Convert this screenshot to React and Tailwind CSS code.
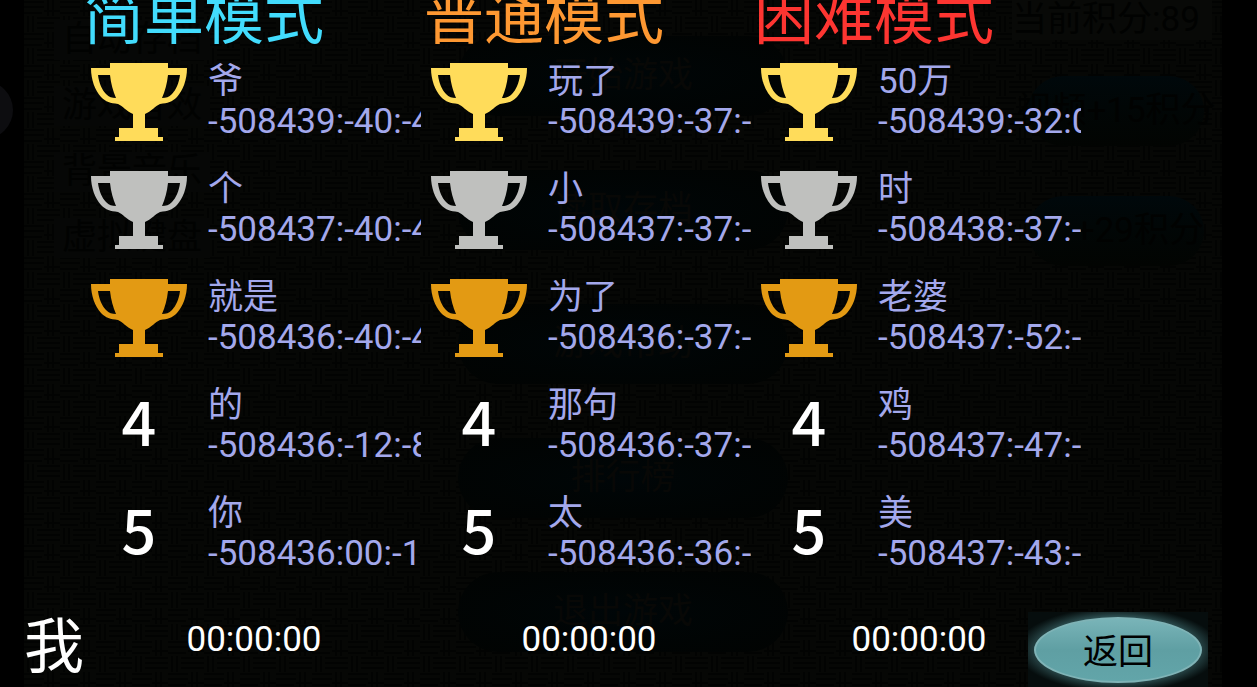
const modes = [
  {
    title: "简单模式",
    color: "text-[#42dcfd]",
    rows: [
      { name: "爷", time: "-508439:-40:-4" },
      { name: "个", time: "-508437:-40:-4" },
      { name: "就是", time: "-508436:-40:-4" },
      { name: "的", time: "-508436:-12:-8" },
      { name: "你", time: "-508436:00:-1" },
    ],
    mine: "00:00:00",
  },
  {
    title: "普通模式",
    color: "text-[#fe9832]",
    rows: [
      { name: "玩了", time: "-508439:-37:-" },
      { name: "小", time: "-508437:-37:-" },
      { name: "为了", time: "-508436:-37:-" },
      { name: "那句", time: "-508436:-37:-" },
      { name: "太", time: "-508436:-36:-" },
    ],
    mine: "00:00:00",
  },
  {
    title: "困难模式",
    color: "text-[#fd3531]",
    rows: [
      { name: "50万", time: "-508439:-32:0" },
      { name: "时", time: "-508438:-37:-" },
      { name: "老婆", time: "-508437:-52:-" },
      { name: "鸡", time: "-508437:-47:-" },
      { name: "美", time: "-508437:-43:-" },
    ],
    mine: "00:00:00",
  },
];

const trophyColors = ["text-[#ffdc5a]", "text-[#bfc0be]", "text-[#e39a13]"];

const settings = ["自动存档", "游戏音效", "背景音乐", "虚拟键盘"];
const menu = ["开始游戏", "读取存档", "游戏帮助", "排行榜", "退出游戏"];

function Trophy({ color }) {
  return (
    <svg viewBox="0 0 96 78" className={`w-24 ${color}`} fill="currentColor" fillRule="evenodd">
      <path d="M19 0H77V5H96C96 17 92 27 86 34C81 39 77 40 69 41C64 43 61 48 54 51V65H67V74H72V78H24V74H28V65H42V51C35 48 32 43 27 41C19 40 15 39 10 34C4 27 0 17 0 5H19ZM7 12C8 20 11 27 15 31C18 34 21 35 25 35C22 28 20 21 19 12ZM89 12H77C76 21 74 28 71 35C75 35 78 34 81 31C85 27 88 20 89 12Z" />
    </svg>
  );
}

// Main menu that stays dimmed behind the leaderboard
function DimmedMenu() {
  return (
    <div aria-hidden="true" className="absolute inset-0 bg-black pl-6 pr-[35px]">
      <div className="absolute -left-[45px] top-[81px] size-[58px] rounded-full bg-[#0d0d10]" />
      <div className="relative h-full bg-[#060705] overflow-hidden">
        <svg className="absolute inset-0 w-full h-full">
          <defs>
            <pattern id="weave" width="36" height="32" patternUnits="userSpaceOnUse">
              <path
                d="M0 2H20M0 7H20M24 0V16M29 0V16M20 11H36M4 16V32M9 16V32M13 18H36M13 23H36M13 28H36M0 13H18"
                stroke="#020302"
                strokeWidth="2"
                fill="none"
              />
            </pattern>
          </defs>
          <rect width="100%" height="100%" fill="url(#weave)" />
        </svg>
        <div className="relative grid grid-cols-[434fr_330fr_434fr] text-[35px] leading-10">
          <div className="pl-[30px] pt-5 flex flex-col items-start gap-[26px] text-[#010201]">
            {settings.map((item) => (
              <span key={item} className="px-2 bg-[#060706]">{item}</span>
            ))}
          </div>
          <div className="pt-9 flex flex-col gap-[54px] text-[#080806]">
            {menu.map((item) => (
              <span
                key={item}
                className="h-20 rounded-full flex items-center justify-center bg-radial from-[#000608] to-[#010302]"
              >
                {item}
              </span>
            ))}
          </div>
          <div className="pl-[224px] text-[#010201] whitespace-nowrap">
            <div className="bg-[#080907] w-[200px]">当前积分:89</div>
            <div className="ml-4 mt-9 w-[176px] h-[70px] rounded-full bg-linear-to-b from-[#00080b] to-[#020402] flex items-center justify-center">
              视频+15积分
            </div>
            <div className="ml-4 mt-[50px] w-[176px] h-[70px] rounded-full bg-linear-to-b from-[#00080b] to-[#020402] flex items-center justify-end">
              +29积分
            </div>
          </div>
        </div>
      </div>
    </div>
  );
}

function Rank({ index }) {
  if (index < trophyColors.length) {
    return <Trophy color={trophyColors[index]} />;
  }
  return (
    <span className="w-24 pb-3 text-center text-[61px] leading-[66px] font-medium font-['Noto_Sans_CJK_SC',sans-serif] text-white">
      {index + 1}
    </span>
  );
}

function ModeColumn({ mode }) {
  return (
    <section className="min-w-0 pr-[3px]">
      <h2 className={`text-[60px] leading-[60px] -mt-[11px] whitespace-nowrap ${mode.color}`}>
        {mode.title}
      </h2>
      <ol className="mt-[13px] pl-[7px] flex flex-col gap-7">
        {mode.rows.map((row, index) => (
          <li key={index} className="h-20 flex items-center gap-[21px]">
            <span className="shrink-0 flex">
              <Rank index={index} />
            </span>
            <div className="min-w-0 flex-1 text-[35px] leading-10 text-[#a3a8ec] whitespace-nowrap overflow-hidden">
              <div>{row.name}</div>
              <div>{row.time}</div>
            </div>
          </li>
        ))}
      </ol>
    </section>
  );
}

export default function App() {
  return (
    <div className="relative min-h-screen overflow-hidden bg-black font-[Roboto,'Noto_Sans_CJK_SC',sans-serif]">
      <DimmedMenu />
      <main className="relative">
        <div className="pl-[84px] pr-[173px] grid grid-cols-[34fr_33fr_33fr]">
          {modes.map((mode) => (
            <ModeColumn key={mode.title} mode={mode} />
          ))}
        </div>

        <footer className="mt-[38px] pl-6 pr-[49px] flex items-start text-white">
          <span className="w-[60px] mt-1.5 text-[60px] leading-[60px]">我</span>
          <div className="flex-1 mt-2 grid grid-cols-[34fr_33fr_33fr] text-center text-[35px] leading-10">
            {modes.map((mode) => (
              <span key={mode.title}>{mode.mine}</span>
            ))}
          </div>
          <button
            type="button"
            className="relative -ml-14 w-[180px] h-[75px] flex items-center justify-center text-[35px] text-black bg-radial from-[#3d6a6d] from-55% to-[#060d0d] to-80%"
          >
            <span className="w-[168px] h-[66px] pt-2 rounded-[50%] flex items-center justify-center border-2 border-[#7fb3b6] bg-linear-to-b from-[#79b4b8] via-[#5f9fa3] to-[#62a5a9]">
              返回
            </span>
          </button>
        </footer>
      </main>
    </div>
  );
}
